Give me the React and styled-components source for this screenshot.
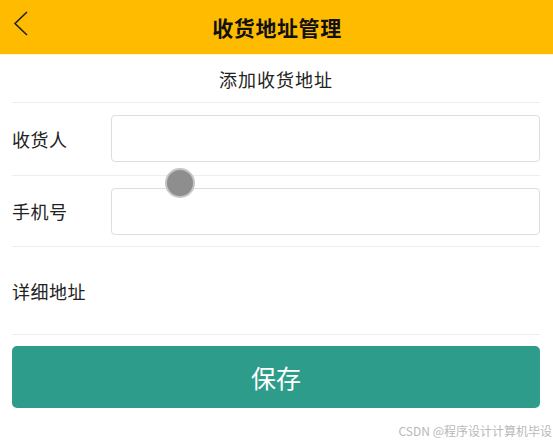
import React from "react";
import styled, { createGlobalStyle } from "styled-components";

const GlobalStyle = createGlobalStyle`
  html, body {
    margin: 0;
    padding: 0;
    background: #ffffff;
    font-family: "Noto Sans CJK SC", "Noto Sans", sans-serif;
  }
`;

const Page = styled.div`
  position: relative;
  width: 553px;
  height: 441px;
  overflow: hidden;
  background: #ffffff;
`;

const Header = styled.div`
  position: relative;
  height: 54px;
  background: #ffbb00;
  display: flex;
  align-items: center;
  justify-content: center;
  border-bottom: 1px solid #fff3d6;
`;

const BackButton = styled.div`
  position: absolute;
  left: 12px;
  top: 10px;
  width: 18px;
  height: 28px;
  cursor: pointer;
`;

const Title = styled.h1`
  margin: 0 0 0 1px;
  font-size: 21px;
  font-weight: 700;
  color: #111;
  letter-spacing: 0.6px;
`;

const Body = styled.div`
  padding: 0 13px 0 12px;
`;

const SubTitle = styled.div`
  height: 47px;
  display: flex;
  align-items: center;
  justify-content: center;
  font-size: 18px;
  letter-spacing: 1px;
  color: #222;
  border-bottom: 1px solid #eeeeee;
`;

const Row = styled.div`
  display: flex;
  align-items: center;
  height: ${(p) => p.h}px;
  border-bottom: 1px solid #eeeeee;
`;

const Label = styled.label`
  width: 99px;
  flex: none;
  font-size: 18px;
  letter-spacing: 0.5px;
  color: #222;
`;

const Input = styled.input`
  flex: 1;
  height: 47px;
  box-sizing: border-box;
  border: 1px solid #dedede;
  border-radius: 4px;
  padding: 0 10px;
  font-size: 16px;
  outline: none;
  margin-top: ${(p) => p.mt || 0}px;
`;

const SaveButton = styled.button`
  display: block;
  width: 100%;
  height: 62px;
  margin-top: 11px;
  border: none;
  border-radius: 5px;
  background: #2e9c8a;
  color: #ffffff;
  font-family: inherit;
  font-size: 25px;
  cursor: pointer;
`;

const Watermark = styled.div`
  position: absolute;
  right: 1px;
  bottom: 2px;
  font-size: 12px;
  color: #b8b8b8;
`;

const TouchDot = styled.div`
  position: absolute;
  left: 165px;
  top: 168px;
  width: 26px;
  height: 26px;
  border-radius: 50%;
  background: #8e8e8e;
  border: 2px solid #c4c4c4;
`;

export default function App() {
  return (
    <Page>
      <GlobalStyle />
      <Header>
        <BackButton>
          <svg width="18" height="28" viewBox="0 0 18 28">
            <path d="M15 2 L3 13.5 L15 25" fill="none" stroke="#222" strokeWidth="1.6" />
          </svg>
        </BackButton>
        <Title>收货地址管理</Title>
      </Header>
      <Body>
        <SubTitle>添加收货地址</SubTitle>
        <Row h={72}>
          <Label>收货人</Label>
          <Input mt={-1} />
        </Row>
        <Row h={70}>
          <Label>手机号</Label>
          <Input mt={1} />
        </Row>
        <Row h={87}>
          <Label>详细地址</Label>
        </Row>
        <SaveButton>保存</SaveButton>
      </Body>
      <TouchDot />
      <Watermark>CSDN @程序设计计算机毕设</Watermark>
    </Page>
  );
}
